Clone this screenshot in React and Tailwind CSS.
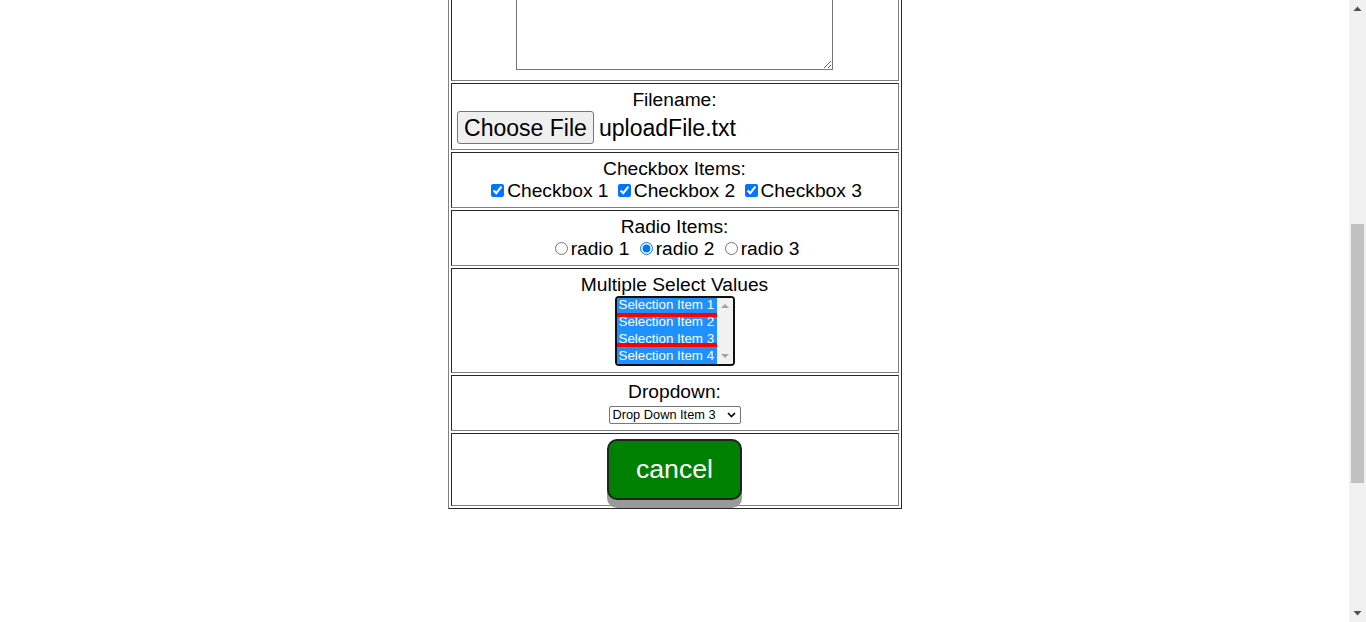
import React from 'react';

const cell = 'border border-t-[#282828] border-l-[#282828] border-r-[#808080] border-b-[#808080] pr-px';

function PageScrollbar() {
  return (
    <div className="flex w-[17px] shrink-0 flex-col bg-[#f1f1f1]">
      <div className="flex h-[17px] items-center justify-center">
        <svg width="9" height="5" viewBox="0 0 9 5">
          <path d="M0.5 5 L4.5 0.5 L8.5 5 Z" fill="#505050" />
        </svg>
      </div>
      <div className="h-[207px]" />
      <div className="mx-[2px] h-[259px] bg-[#c1c1c1]" />
      <div className="flex-1" />
      <div className="flex h-[17px] items-center justify-center">
        <svg width="9" height="5" viewBox="0 0 9 5">
          <path d="M0.5 0 L4.5 4.5 L8.5 0 Z" fill="#505050" />
        </svg>
      </div>
    </div>
  );
}

function MultiSelect() {
  return (
    <div className="flex h-[70px] w-[120px] overflow-hidden rounded-[4px] border-2 border-[#101010] bg-white text-[13.33px] text-white">
      <div className="flex flex-1 flex-col bg-[#1e90ff] leading-[17px]">
        <div className="flex h-[15px] shrink-0 items-end overflow-hidden pl-[2px]">
          <span className="block h-[17px] shrink-0">Selection Item 1</span>
        </div>
        <div className="h-[4px] shrink-0 bg-[#ff0000]" />
        <div className="flex h-[13px] shrink-0 items-end overflow-hidden pl-[2px]">
          <span className="block h-[17px] shrink-0">Selection Item 2</span>
        </div>
        <div className="h-[13px] shrink-0 overflow-hidden pl-[2px]">
          <span className="block h-[17px]">Selection Item 3</span>
        </div>
        <div className="h-[4px] shrink-0 bg-[#ff0000]" />
        <div className="h-[17px] shrink-0 pl-[2px]">Selection Item 4</div>
      </div>
      <div className="flex w-[16px] flex-col items-center justify-between bg-[#f1f1f1] py-[6px]">
        <svg width="8" height="4" viewBox="0 0 8 4">
          <path d="M0 4 L4 0 L8 4 Z" fill="#a3a3a3" />
        </svg>
        <svg width="8" height="4" viewBox="0 0 8 4">
          <path d="M0 0 L4 4 L8 0 Z" fill="#a3a3a3" />
        </svg>
      </div>
    </div>
  );
}

export default function App() {
  return (
    <div className="flex h-[622px] w-[1366px] overflow-hidden bg-white font-['Liberation_Sans',Arial,sans-serif] text-[19.2px] leading-[22px] text-black">
      <div className="flex w-[1349px] justify-center pl-px">
        <div className="flex w-[454px] flex-col gap-[2px] self-start border-x border-b border-l-[#808080] border-r-[#282828] border-b-[#282828] px-[2px] pb-[2px]">
          {/* textarea row, top scrolled out of view */}
          <div className="flex h-[81px] flex-col items-center border border-t-0 border-l-[#282828] border-r-[#808080] border-b-[#808080] pr-px">
            <textarea
              readOnly
              className="block h-[70px] w-[317px] resize-y border border-t-0 border-[#767676] bg-white"
            />
          </div>

          <div className={`${cell} h-[67px] pt-[5px]`}>
            <div className="text-center">Filename:</div>
            <div className="flex items-center pl-[5px] text-[23.04px]">
              <button className="flex h-[33px] items-center rounded-[3px] border border-[#767676] bg-[#efefef] px-[6px]">
                Choose File
              </button>
              <span className="ml-[5px]">uploadFile.txt</span>
            </div>
          </div>

          <div className={`${cell} h-[56px] pt-[5px] text-center`}>
            <div>Checkbox Items:</div>
            <div>
              <input type="checkbox" defaultChecked className="m-[3px_3px_3px_4px]" />Checkbox 1{' '}
              <input type="checkbox" defaultChecked className="m-[3px_3px_3px_4px]" />Checkbox 2{' '}
              <input type="checkbox" defaultChecked className="m-[3px_3px_3px_4px]" />Checkbox 3
            </div>
          </div>

          <div className={`${cell} h-[56px] pt-[5px] text-center`}>
            <div>Radio Items:</div>
            <div>
              <input type="radio" name="r" className="m-[3px_3px_0_5px]" />radio 1{' '}
              <input type="radio" name="r" defaultChecked className="m-[3px_3px_0_5px]" />radio 2{' '}
              <input type="radio" name="r" className="m-[3px_3px_0_5px]" />radio 3
            </div>
          </div>

          <div className={`${cell} flex h-[105px] flex-col items-center pt-[5px]`}>
            <div>Multiple Select Values</div>
            <MultiSelect />
          </div>

          <div className={`${cell} flex h-[56px] flex-col items-center pt-[5px]`}>
            <div>Dropdown:</div>
            <div className="mt-[3px] flex h-[18px] w-[132px] items-center justify-between rounded-[2px] border border-[#767676] pl-[3px] pr-[4px] text-[12.8px] leading-[16px]">
              <span>Drop Down Item 3</span>
              <svg width="9" height="6" viewBox="0 0 9 6">
                <path d="M1 1 L4.5 4.5 L8 1" fill="none" stroke="#000" strokeWidth="1.6" />
              </svg>
            </div>
          </div>

          <div className={`${cell} flex h-[73px] flex-col items-center pt-[5px]`}>
            <button className="flex h-[61px] w-[135px] items-center justify-center rounded-[10px] border-2 border-[#222] bg-[#008000] pb-[2px] text-[26.67px] text-white shadow-[0_8px_0_#999]">
              cancel
            </button>
          </div>
        </div>
      </div>
      <PageScrollbar />
    </div>
  );
}
